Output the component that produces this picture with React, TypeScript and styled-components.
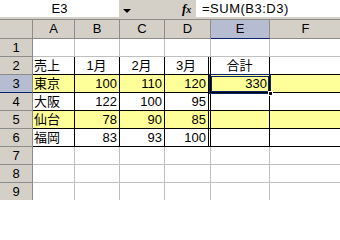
import React from 'react';
import styled, { createGlobalStyle, css } from 'styled-components';

const GlobalStyle = createGlobalStyle`
  html, body {
    margin: 0;
    padding: 0;
    background: #ffffff;
  }
  body {
    font-family: "Liberation Sans", "Noto Sans CJK JP", sans-serif;
    overflow: hidden;
  }
`;

const FACE = '#d4d0c8';
const GRID = '#c0c0c0';
const HEAD_LINE = '#8e8c88';
const NAVY = '#0a246a';
const ACTIVE_HEAD = '#b6bdd2';
const YELLOW = '#ffff99';

const Window = styled.div`
  width: 340px;
  height: 200px;
  overflow: hidden;
  background: ${FACE};
  display: flex;
  flex-direction: column;
`;

const FormulaBar = styled.div`
  display: flex;
  height: 17px;
  flex-shrink: 0;
`;

const NameBox = styled.div`
  width: 119px;
  background: #ffffff;
  font-size: 13px;
  line-height: 17px;
  text-align: center;
  color: #000;
`;

const DropButton = styled.div`
  width: 16px;
  display: flex;
  align-items: center;
  justify-content: center;
  padding-top: 4px;
  box-sizing: border-box;
`;

const Arrow = styled.span`
  width: 0;
  height: 0;
  border-left: 4px solid transparent;
  border-right: 4px solid transparent;
  border-top: 4px solid #000;
`;

const Spacer = styled.div`
  flex: 1;
`;

const FxLabel = styled.div`
  width: 22px;
  padding-left: 8px;
  box-sizing: border-box;
  font-family: "Liberation Serif", serif;
  font-style: italic;
  font-weight: bold;
  font-size: 13px;
  line-height: 17px;
  color: #000;

  small {
    font-size: 10px;
  }
`;

const FormulaInput = styled.div`
  width: 144px;
  background: #ffffff;
  font-size: 13px;
  line-height: 17px;
  letter-spacing: 0.5px;
  padding-left: 6px;
  box-sizing: border-box;
  color: #000;
  white-space: nowrap;
`;

const Strip = styled.div`
  height: 2px;
  flex-shrink: 0;
`;

const Sheet = styled.div`
  display: grid;
  grid-template-columns: 33px 42px 45px 45px 46px 59px 72px;
  grid-template-rows: 20px;
  grid-auto-rows: 18px;
  background: #ffffff;
`;

const HeaderCell = styled.div<{ $active?: boolean }>`
  box-sizing: border-box;
  background: ${({ $active }) => ($active ? ACTIVE_HEAD : FACE)};
  border-top: 1px solid ${HEAD_LINE};
  border-right: 1px solid ${HEAD_LINE};
  border-bottom: 1px solid ${({ $active }) => ($active ? NAVY : HEAD_LINE)};
  font-size: 13px;
  line-height: 18px;
  text-align: center;
  color: #000;
`;

const RowHeader = styled.div<{ $active?: boolean }>`
  box-sizing: border-box;
  background: ${({ $active }) => ($active ? ACTIVE_HEAD : FACE)};
  border-right: 1px solid ${HEAD_LINE};
  border-bottom: 1px solid ${({ $active }) => ($active ? NAVY : HEAD_LINE)};
  font-size: 13px;
  line-height: 17px;
  text-align: center;
  color: #000;
`;

type Edge = 'grid' | 'black' | 'double';

const Cell = styled.div<{
  $fill?: boolean;
  $right: Edge;
  $bottom: Edge;
  $align: 'left' | 'right' | 'center';
  $selected?: boolean;
}>`
  position: relative;
  box-sizing: border-box;
  background: ${({ $fill }) => ($fill ? YELLOW : '#ffffff')};
  border-right: ${({ $right }) =>
    $right === 'double' ? '3px double #000' : `1px solid ${$right === 'black' ? '#000' : GRID}`};
  border-bottom: 1px solid ${({ $bottom }) => ($bottom === 'black' ? '#000' : GRID)};
  font-size: 13px;
  line-height: 17px;
  text-align: ${({ $align }) => $align};
  padding: 0 2px 0 1px;
  color: #000;
  white-space: nowrap;

  ${({ $selected }) =>
    $selected &&
    css`
      &::after {
        content: '';
        position: absolute;
        top: -1px;
        left: -2px;
        right: -2px;
        bottom: -2px;
        border: 3px double ${NAVY};
        z-index: 2;
        pointer-events: none;
      }
    `}
`;

const FillHandle = styled.span`
  position: absolute;
  right: -4px;
  bottom: -4px;
  width: 5px;
  height: 5px;
  background: #000;
  border: 1px solid #fff;
  box-sizing: border-box;
  z-index: 3;
`;

const columns = ['A', 'B', 'C', 'D', 'E', 'F'];

const data: (string | number)[][] = [
  ['', '', '', '', '', ''],
  ['売上', '1月', '2月', '3月', '合計', ''],
  ['東京', 100, 110, 120, 330, ''],
  ['大阪', 122, 100, 95, '', ''],
  ['仙台', 78, 90, 85, '', ''],
  ['福岡', 83, 93, 100, '', ''],
  ['', '', '', '', '', ''],
  ['', '', '', '', '', ''],
  ['', '', '', '', '', ''],
];

const App: React.FC = () => {
  return (
    <>
      <GlobalStyle />
      <Window>
        <FormulaBar>
          <NameBox>E3</NameBox>
          <DropButton>
            <Arrow />
          </DropButton>
          <Spacer />
          <FxLabel>
            f<small>x</small>
          </FxLabel>
          <FormulaInput>=SUM(B3:D3)</FormulaInput>
        </FormulaBar>
        <Strip />
        <Sheet>
          <HeaderCell />
          {columns.map((c) => (
            <HeaderCell key={c} $active={c === 'E'}>
              {c}
            </HeaderCell>
          ))}
          {data.map((row, r) => {
            const rowNo = r + 1;
            const inTable = rowNo >= 2 && rowNo <= 6;
            const fill = rowNo === 3 || rowNo === 5;
            return (
              <React.Fragment key={rowNo}>
                <RowHeader $active={rowNo === 3}>{rowNo}</RowHeader>
                {row.map((value, c) => {
                  const right: Edge = !inTable || c === 5 ? 'grid' : c === 3 ? 'double' : 'black';
                  const bottom: Edge = inTable ? 'black' : 'grid';
                  const align =
                    c === 0 ? 'left' : rowNo === 2 ? 'center' : typeof value === 'number' ? 'right' : 'left';
                  const selected = rowNo === 3 && c === 4;
                  return (
                    <Cell
                      key={c}
                      $fill={fill}
                      $right={right}
                      $bottom={bottom}
                      $align={align}
                      $selected={selected}
                    >
                      {value}
                      {selected && <FillHandle />}
                    </Cell>
                  );
                })}
              </React.Fragment>
            );
          })}
        </Sheet>
      </Window>
    </>
  );
};

export default App;
